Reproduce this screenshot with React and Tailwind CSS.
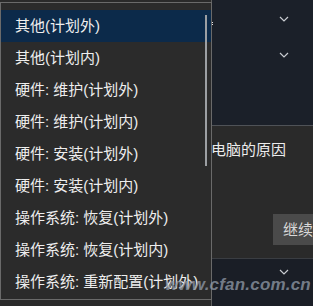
const ITEMS = [
  '其他(计划外)',
  '其他(计划内)',
  '硬件: 维护(计划外)',
  '硬件: 维护(计划内)',
  '硬件: 安装(计划外)',
  '硬件: 安装(计划内)',
  '操作系统: 恢复(计划外)',
  '操作系统: 恢复(计划内)',
  '操作系统: 重新配置(计划外)',
]

function Chevron() {
  return (
    <svg width="10" height="6" viewBox="0 0 10 6" fill="none" className="text-[#c9ccd1]">
      <path d="M1 1l4 4 4-4" stroke="currentColor" strokeWidth="1.2" />
    </svg>
  )
}

export default function App() {
  return (
    <div
      className="relative w-[313px] h-[306px] overflow-hidden bg-[#2a2a2a] flex"
      style={{ fontFamily: '"Liberation Sans", "Noto Sans CJK SC", sans-serif' }}
    >
      {/* page behind the menu */}
      <div className="w-[211px] shrink-0" />
      <div className="flex-1 flex flex-col border-l border-[#5e5e5e]">
        <div className="h-[125px] bg-[#1b2029] flex flex-col items-end pr-[24px] pt-[16px] gap-[30px]">
          <Chevron />
          <Chevron />
        </div>
        <div className="h-[133px] border-t border-[#4f5257] flex flex-col">
          <div className="pt-[14px] -ml-[1px] text-[15px] text-[#ececec] leading-[20px]">电脑的原因</div>
          <div className="mt-[54px] self-end w-[40px] h-[31px] bg-[#4a4a4a] pl-[10px] text-[15px] text-[#d8d8d8] leading-[31px] whitespace-nowrap overflow-hidden">
            继续
          </div>
        </div>
        <div className="flex-1 bg-[#1a1e26] border-t border-[#3a3d42] flex justify-end pr-[24px] pt-[10px]">
          <Chevron />
        </div>
      </div>

      {/* resize grip */}
      <div className="absolute left-[211px] top-[22px] flex flex-col gap-[1px]">
        <div className="w-[2px] h-[1px] bg-[#e6e6e6]" />
        <div className="w-[2px] h-[1px] bg-[#e6e6e6]" />
      </div>

      {/* dropdown menu */}
      <div className="absolute left-0 top-[2px] w-[212px] h-[298px] bg-[#2b2b2b] border border-[#6a6a6a] pt-[7px]">
        {ITEMS.map((item, i) => (
          <div
            key={item}
            className={`h-[32px] pl-[14px] flex items-center text-[15px] text-[#eeeeee] whitespace-nowrap ${
              i === 0 ? 'bg-[#0c2a4a]' : ''
            }`}
          >
            {item}
          </div>
        ))}
        <div className="absolute right-[4px] top-[12px] w-[2px] h-[151px] bg-[#9c9fa3]" />
      </div>

      {/* watermark */}
      <div className="absolute left-[165px] top-[272px] text-[17px] font-bold italic text-[#8d96a3]/80 tracking-[0.2px]">
        www.cfan.com.cn
      </div>
    </div>
  )
}
